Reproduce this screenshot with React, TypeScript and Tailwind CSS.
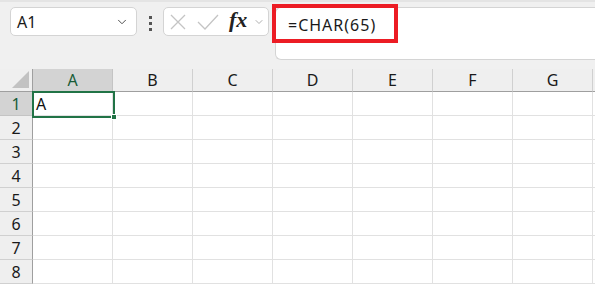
import { Fragment } from "react"
import { ChevronDown } from "lucide-react"

const cols = ["A", "B", "C", "D", "E", "F", "G"]
const rows = [1, 2, 3, 4, 5, 6, 7, 8]

export default function App() {
  return (
    <div className="relative w-[595px] h-[284px] overflow-hidden bg-white font-['Noto_Sans',sans-serif] text-[#222]">
      {/* Toolbar / formula bar */}
      <div className="flex items-start h-[69px] bg-[#f0f0f0] pl-[10px] pt-[7px] border-t-2 border-[#e4e4e4]">
        <div className="flex items-center justify-between w-[127px] h-[29px] -mt-[2px] bg-white border border-[#d4d4d4] rounded-[5px] pl-[6px] pr-[7px]">
          <span className="text-[16px] text-[#1a1a1a]">A1</span>
          <ChevronDown className="w-[14px] h-[14px] text-[#444]" strokeWidth={1.6} />
        </div>
        <div className="flex flex-col items-center gap-[3px] w-[26px] mt-[7px]">
          <span className="w-[3px] h-[3px] bg-[#555]" />
          <span className="w-[3px] h-[3px] bg-[#555]" />
          <span className="w-[3px] h-[3px] bg-[#555]" />
        </div>
        <div className="flex items-center w-[106px] h-[29px] -mt-[2px] bg-white border border-[#d4d4d4] rounded-[5px] pl-[6px]">
          <svg width="16" height="16" viewBox="0 0 16 16" className="text-[#c4c4c4]">
            <path d="M1 1 15 15M15 1 1 15" stroke="currentColor" strokeWidth="1.3" fill="none" />
          </svg>
          <svg width="22" height="16" viewBox="0 0 22 16" className="ml-[11px] text-[#c4c4c4]">
            <path d="M1 8 8 15 21 1" stroke="currentColor" strokeWidth="1.3" fill="none" />
          </svg>
          <span className="ml-[10px] text-[22px] italic font-semibold font-['Liberation_Serif',serif] text-[#222] leading-none -mt-[3px]">fx</span>
          <ChevronDown className="w-[12px] h-[12px] ml-[6px] text-[#9a9a9a]" strokeWidth={1.6} />
        </div>
        <div className="flex-1 h-[53px] ml-[6px] -mt-[2px] bg-white border border-r-0 border-[#d4d4d4] rounded-l-[6px] pl-[12px] pt-[5px]">
          <span className="text-[16px] tracking-[1px] text-[#1a1a1a]">=CHAR(65)</span>
        </div>
      </div>

      {/* Annotation box */}
      <div className="absolute left-[272px] top-[4px] w-[126px] h-[39px] border-4 border-[#ec1c24]" />

      {/* Grid */}
      <div className="grid grid-cols-[33px_repeat(7,80px)_1fr] grid-rows-[23px_repeat(8,24px)] text-[16px]">
        <div className="relative bg-[#efefef] border-r border-b border-[#9f9f9f]">
          <div className="absolute right-[3px] bottom-[3px] w-0 h-0 border-l-[17px] border-l-transparent border-b-[17px] border-b-[#c2c2c2]" />
        </div>
        {cols.map((c, i) => (
          <div
            key={c}
            className={
              i === 0
                ? "flex items-center justify-center bg-[#d3d3d3] border-r border-b border-r-[#c4c4c4] border-b-[#9f9f9f] text-[#185c37]"
                : "flex items-center justify-center bg-[#efefef] border-r border-b border-r-[#d0d0d0] border-b-[#9f9f9f] text-[#1a1a1a]"
            }
          >
            {c}
          </div>
        ))}
        <div className="bg-[#efefef] border-b border-[#9f9f9f]" />
        {rows.map((r) => (
          <Fragment key={r}>
            <div
              className={
                r === 1
                  ? "flex items-center justify-center bg-[#d3d3d3] border-r border-b border-r-[#9f9f9f] border-b-[#c4c4c4] text-[#185c37]"
                  : "flex items-center justify-center bg-[#efefef] border-r border-b border-r-[#9f9f9f] border-b-[#d0d0d0] text-[#1a1a1a]"
              }
            >
              {r}
            </div>
            {cols.map((c) => (
              <div key={c + r} className="flex items-center pl-[3px] border-r border-b border-[#e1e1e1] text-[#111]">
                {r === 1 && c === "A" ? "A" : ""}
              </div>
            ))}
            <div className="border-b border-[#e1e1e1]" />
          </Fragment>
        ))}
      </div>

      {/* Active cell selection */}
      <div className="absolute left-[32px] top-[91px] w-[83px] h-[27px] border-2 border-[#217346]" />
      <div className="absolute left-[111px] top-[114px] w-[6px] h-[6px] bg-[#217346] border border-white" />
    </div>
  )
}
